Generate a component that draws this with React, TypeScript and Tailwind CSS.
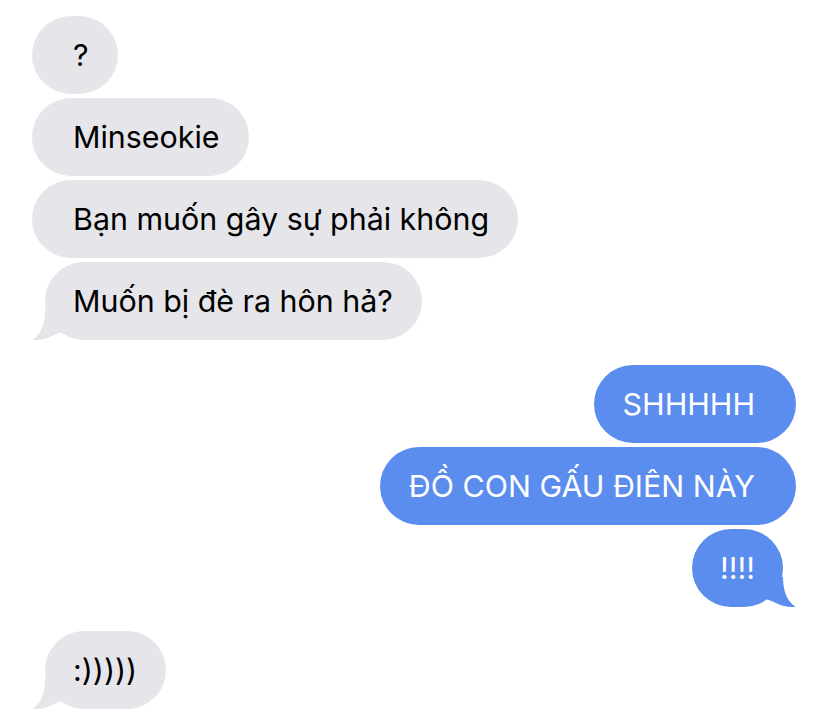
import type { ReactNode } from 'react'

type Side = 'left' | 'right'

function Tail({ side, color }: { side: Side; color: string }) {
  // little curled tail at the bottom corner of the last bubble in a run
  if (side === 'left') {
    return (
      <svg
        className="absolute bottom-0 left-[-13px]"
        width="30"
        height="30"
        viewBox="0 0 30 30"
      >
        <path
          d="M13 0 C13 14 9 24 1 29.5 C0.5 30 1 30 2 30 C10 30 17 28 22 25 L30 22 L30 0 Z"
          fill={color}
        />
      </svg>
    )
  }
  return (
    <svg
      className="absolute bottom-0 right-[-13px]"
      width="30"
      height="30"
      viewBox="0 0 30 30"
    >
      <path
        d="M17 0 C17 14 21 24 29 29.5 C29.5 30 29 30 28 30 C20 30 13 28 8 25 L0 22 L0 0 Z"
        fill={color}
      />
    </svg>
  )
}

function Bubble({
  side,
  tail = false,
  children,
}: {
  side: Side
  tail?: boolean
  children: ReactNode
}) {
  const left = side === 'left'
  const color = left ? '#e5e5ea' : '#5b8def'

  let pad = ''
  if (left) pad = tail ? 'ml-[13px] pl-[28px] pr-[29px]' : 'pl-[41px] pr-[29px]'
  else pad = tail ? 'mr-[13px] pl-[28px] pr-[28px]' : 'pl-[29px] pr-[41px]'

  return (
    <div className={left ? 'flex justify-start' : 'flex justify-end'}>
      <div
        className={`relative h-[78px] rounded-[39px] flex items-center text-[30.4px] leading-[38px] whitespace-nowrap ${pad} ${
          left ? 'bg-[#e5e5ea] text-black' : 'bg-[#5b8def] text-white'
        }`}
      >
        {tail && <Tail side={side} color={color} />}
        <span className="relative">{children}</span>
      </div>
    </div>
  )
}

export default function App() {
  return (
    <div
      className="w-[828px] h-[728px] bg-white overflow-hidden px-8 pt-4"
      style={{ fontFamily: 'Inter, "Noto Sans", sans-serif' }}
    >
      <div className="flex flex-col gap-1">
        <Bubble side="left">?</Bubble>
        <Bubble side="left">Minseokie</Bubble>
        <Bubble side="left">Bạn muốn gây sự phải không</Bubble>
        <Bubble side="left" tail>
          Muốn bị đè ra hôn hả?
        </Bubble>
      </div>

      <div className="flex flex-col gap-1 mt-[25px]">
        <Bubble side="right">SHHHHH</Bubble>
        <Bubble side="right">ĐỒ CON GẤU ĐIÊN NÀY</Bubble>
        <Bubble side="right" tail>
          !!!!
        </Bubble>
      </div>

      <div className="flex flex-col gap-1 mt-6">
        <Bubble side="left" tail>
          :)))))
        </Bubble>
      </div>
    </div>
  )
}
